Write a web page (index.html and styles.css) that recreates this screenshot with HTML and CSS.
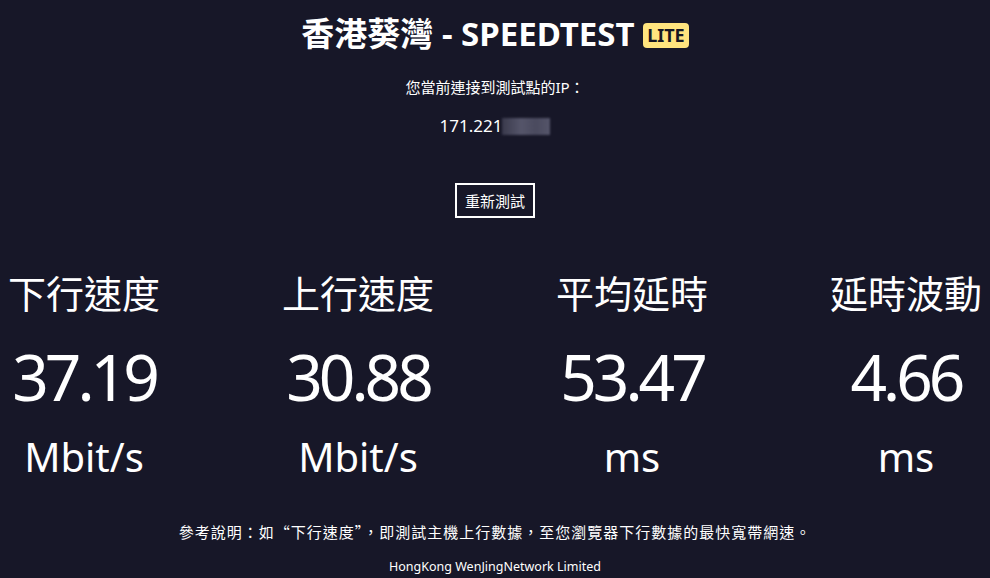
FILE: index.html
```html
<!DOCTYPE html>
<html lang="zh-Hant">

<head>
    <meta charset="UTF-8">
    <meta name="viewport" content="width=device-width, initial-scale=1.0">
    <title>香港葵灣 - SPEEDTEST</title>
    <link rel="stylesheet" href="styles.css">
</head>

<body>
    <div class="page">
        <h1 class="title">香港葵灣 - SPEEDTEST <span class="badge">LITE</span></h1>
        <p class="ip-label">您當前連接到測試點的IP：</p>
        <p class="ip">171.221<span class="ip-mask"></span></p>

        <button class="retest" id="retest">重新測試</button>

        <div class="results">
            <div class="stat">
                <div class="stat-name">下行速度</div>
                <div class="stat-value">37.19</div>
                <div class="stat-unit">Mbit/s</div>
            </div>
            <div class="stat">
                <div class="stat-name">上行速度</div>
                <div class="stat-value">30.88</div>
                <div class="stat-unit">Mbit/s</div>
            </div>
            <div class="stat">
                <div class="stat-name">平均延時</div>
                <div class="stat-value">53.47</div>
                <div class="stat-unit">ms</div>
            </div>
            <div class="stat">
                <div class="stat-name">延時波動</div>
                <div class="stat-value">4.66</div>
                <div class="stat-unit">ms</div>
            </div>
        </div>

        <p class="note">參考說明：如“下行速度”，即測試主機上行數據，至您瀏覽器下行數據的最快寬帶網速。</p>
        <p class="company">HongKong WenJingNetwork Limited</p>
    </div>
</body>

</html>
```

FILE: styles.css
```css
body {
    margin: 0;
    background-color: #171728;
    color: #ffffff;
    font-family: "Noto Sans", "Noto Sans CJK TC", sans-serif;
}

.page {
    display: flex;
    flex-direction: column;
    align-items: center;
    padding-top: 12px;
}

.title {
    margin: 0;
    font-size: 33px;
    font-weight: bold;
    line-height: 44px;
}

.badge {
    display: inline-block;
    vertical-align: 4px;
    background-color: #ffe47e;
    color: #161622;
    font-size: 18px;
    line-height: 25px;
    padding: 0 4px;
    border-radius: 4px;
}

.ip-label {
    margin: 21px 0 0;
    font-size: 15px;
    line-height: 20px;
}

.ip {
    margin: 17px 0 0;
    font-size: 17px;
    line-height: 24px;
    display: flex;
    align-items: center;
}

.ip-mask {
    display: inline-block;
    width: 48px;
    height: 17px;
    background: linear-gradient(90deg, #3a3a4c, #55556a 40%, #4a4a5e 70%, #55556a);
    filter: blur(1px);
}

.retest {
    margin-top: 45px;
    background: none;
    border: 2px solid #ffffff;
    color: #ffffff;
    font-family: "Noto Sans CJK TC", sans-serif;
    font-size: 15px;
    line-height: 21px;
    padding: 5px 8px;
    cursor: pointer;
}

.results {
    align-self: stretch;
    display: flex;
    justify-content: space-between;
    margin-top: 47px;
}

.stat {
    width: 168px;
    text-align: center;
}

.stat-name {
    font-size: 38px;
    line-height: 56px;
}

.stat-value {
    font-size: 64px;
    line-height: 80px;
    letter-spacing: -4px;
    margin-top: 16px;
}

.stat-unit {
    font-size: 40px;
    line-height: 56px;
    margin-top: 12px;
}

.note {
    margin: 37px 0 0;
    font-family: "Noto Sans CJK TC", sans-serif;
    font-size: 15px;
    line-height: 20px;
    letter-spacing: 1px;
}

.company {
    margin: 16px 0 0;
    font-size: 12.5px;
    line-height: 18px;
}
```
